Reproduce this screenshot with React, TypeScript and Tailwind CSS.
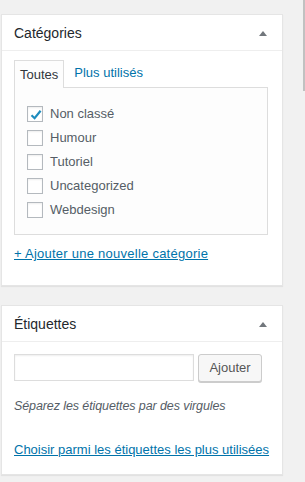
const font = { fontFamily: '"Liberation Sans", Arial, sans-serif' };

function Triangle() {
  return (
    <svg width="8" height="5" viewBox="0 0 8 5" className="shrink-0">
      <path d="M4 0 L8 5 L0 5 Z" fill="#72777c" />
    </svg>
  );
}

function Check() {
  return (
    <svg width="14" height="14" viewBox="0 0 14 14" className="absolute left-[1px] top-[1px]">
      <path d="M2.5 7.2 L5.6 10.2 L11.6 2.8" fill="none" stroke="#1e8cbe" strokeWidth="2.2" />
    </svg>
  );
}

function Row({ label, checked }: { label: string; checked?: boolean }) {
  return (
    <div className="flex items-center h-6 gap-[7px]">
      <span className="relative w-4 h-4 border border-[#b4b9be] bg-white shadow-[inset_0_1px_2px_rgba(0,0,0,0.07)]">
        {checked && <Check />}
      </span>
      <span className="text-[13px] text-[#555d66]">{label}</span>
    </div>
  );
}

function Header({ title }: { title: string }) {
  return (
    <div className="h-9 flex items-center justify-between pl-3 pr-[15px] pt-[2px] border-b border-[#eeeeee]">
      <span className="text-[14px] text-[#23282d]">{title}</span>
      <Triangle />
    </div>
  );
}

export default function App() {
  const cats = ["Humour", "Tutoriel", "Uncategorized", "Webdesign"];
  return (
    <div className="relative w-[305px] h-[482px] bg-[#f1f1f1] pl-[1px] pt-[14px] overflow-hidden" style={font}>
      <div className="absolute right-0 top-0 w-[2px] h-[91px] bg-[#c1c1c1]" />
      <div className="w-[282px] bg-white border border-[#e5e5e5] shadow-[0_1px_1px_rgba(0,0,0,0.06)]">
        <Header title="Catégories" />
        <div className="px-3 pt-2 pb-[21px]">
          <div className="flex items-end">
            <div className="h-[28px] px-[5px] flex items-center border border-b-0 border-[#dddddd] bg-[#fdfdfd] text-[13px] text-[#32373c] relative top-[1px]">
              Toutes
            </div>
            <div className="h-[28px] px-[10px] flex items-center text-[13px] text-[#0073aa]">
              Plus utilisés
            </div>
          </div>
          <div className="w-[254px] border border-[#dddddd] bg-[#fdfdfd] pl-3 pt-[14px] pb-[12px]">
            <Row label="Non classé" checked />
            {cats.map((c) => (
              <Row key={c} label={c} />
            ))}
          </div>
          <div className="mt-[9px] text-[13px] text-[#0073aa] underline tracking-[0.25px]">+ Ajouter une nouvelle catégorie</div>
        </div>
      </div>

      <div className="mt-[19px] w-[282px] bg-white border border-[#e5e5e5] shadow-[0_1px_1px_rgba(0,0,0,0.06)]">
        <Header title="Étiquettes" />
        <div className="px-3 pt-[12px] pb-[14px]">
          <div className="flex items-center gap-1">
            <div className="w-[180px] h-[27px] border border-[#dddddd] bg-white shadow-[inset_0_1px_2px_rgba(0,0,0,0.07)]" />
            <div className="w-[64px] h-[28px] border border-[#cccccc] rounded-[3px] bg-[#f7f7f7] shadow-[0_1px_0_#cccccc] flex items-center justify-center text-[13px] text-[#555555]">
              Ajouter
            </div>
          </div>
          <div className="mt-[15px] text-[12.5px] tracking-[-0.1px] italic text-[#555d66]">
            Séparez les étiquettes par des virgules
          </div>
          <div className="mt-[25px] text-[13px] text-[#0073aa] underline whitespace-nowrap">Choisir parmi les étiquettes les plus utilisées</div>
        </div>
      </div>
    </div>
  );
}
